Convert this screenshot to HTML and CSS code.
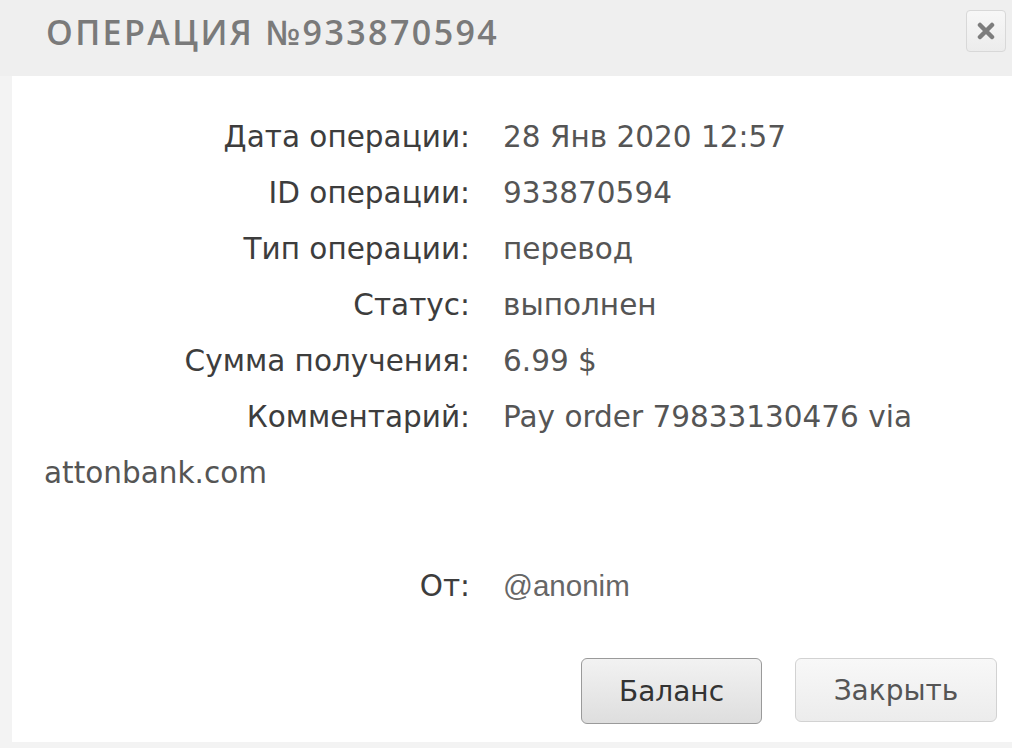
FILE: index.html
```html
<!DOCTYPE html>
<html lang="ru">

<head>
    <meta charset="UTF-8">
    <title>Операция №933870594</title>
    <link rel="stylesheet" href="styles.css">
</head>

<body>
    <div class="dialog">
        <div class="dialog-head">
            <h1 class="dialog-title">Операция №933870594</h1>
            <button class="dialog-close" title="Закрыть">
                <svg width="18" height="18" viewBox="0 0 18 18">
                    <path d="M3 3 L15 15 M15 3 L3 15" stroke="#7d7d7d" stroke-width="4.5" stroke-linecap="round" />
                </svg>
            </button>
        </div>
        <div class="dialog-body">
            <div class="info-row"><span class="info-label">Дата операции:</span><span class="info-value">28 Янв 2020 12:57</span></div>
            <div class="info-row"><span class="info-label">ID операции:</span><span class="info-value">933870594</span></div>
            <div class="info-row"><span class="info-label">Тип операции:</span><span class="info-value">перевод</span></div>
            <div class="info-row"><span class="info-label">Статус:</span><span class="info-value">выполнен</span></div>
            <div class="info-row"><span class="info-label">Сумма получения:</span><span class="info-value">6.99 $</span></div>
            <div class="info-row"><span class="info-label">Комментарий:</span><span class="info-value">Pay order 79833130476 via</span> attonbank.com</div>
            <div class="info-row from-row"><span class="info-label">От:</span><span class="info-value user">@anonim</span></div>
            <div class="dialog-buttons">
                <button class="btn btn-main">Баланс</button>
                <button class="btn">Закрыть</button>
            </div>
        </div>
    </div>
</body>

</html>
```

FILE: styles.css
```css
* {
    margin: 0;
    padding: 0;
    box-sizing: border-box;
}

body {
    background-color: #f3f3f3;
    font-family: "DejaVu Sans", sans-serif;
    width: 1012px;
    height: 748px;
    overflow: hidden;
    padding: 0 0 6px 12px;
}

.dialog {
    height: 742px;
    background-color: #fff;
    display: flex;
    flex-direction: column;
}

.dialog-head {
    height: 76px;
    background-color: #efefef;
    margin-left: -12px;
    padding: 0 6px 0 46px;
    display: flex;
    align-items: center;
    justify-content: space-between;
}

.dialog-title {
    font-family: "Open Sans", sans-serif;
    font-weight: 600;
    font-size: 34px;
    letter-spacing: 2.4px;
    text-transform: uppercase;
    color: #7a7a7a;
    margin-top: -12px;
}

.dialog-close {
    width: 40px;
    height: 42px;
    margin-top: -14px;
    border: 1px solid #d8d8d8;
    border-radius: 4px;
    background: linear-gradient(#f7f7f7, #ececec);
    display: flex;
    align-items: center;
    justify-content: center;
}

.dialog-body {
    flex: 1;
    padding: 33px 32px 0 32px;
    display: flex;
    flex-direction: column;
}

.info-row {
    font-size: 29.5px;
    line-height: 56px;
    color: #555;
}

.info-label {
    display: inline-block;
    width: 426px;
    text-align: right;
    color: #3d3d3d;
}

.info-value {
    margin-left: 33px;
    color: #555;
}

.from-row {
    margin-top: 57px;
}

.user {
    font-family: "Liberation Sans", sans-serif;
    color: #666;
}

.dialog-buttons {
    display: flex;
    justify-content: flex-end;
    gap: 33px;
    margin-top: 44px;
    margin-right: -17px;
}

.btn {
    font-family: "DejaVu Sans", sans-serif;
    font-size: 28px;
    color: #555;
    width: 202px;
    height: 64px;
    border: 1px solid #d2d2d2;
    border-radius: 6px;
    background: linear-gradient(#f8f8f8, #ececec);
}

.btn-main {
    width: 181px;
    height: 66px;
    color: #333;
    border-color: #9a9a9a;
    background: linear-gradient(#f2f2f2, #dedede);
}
```
